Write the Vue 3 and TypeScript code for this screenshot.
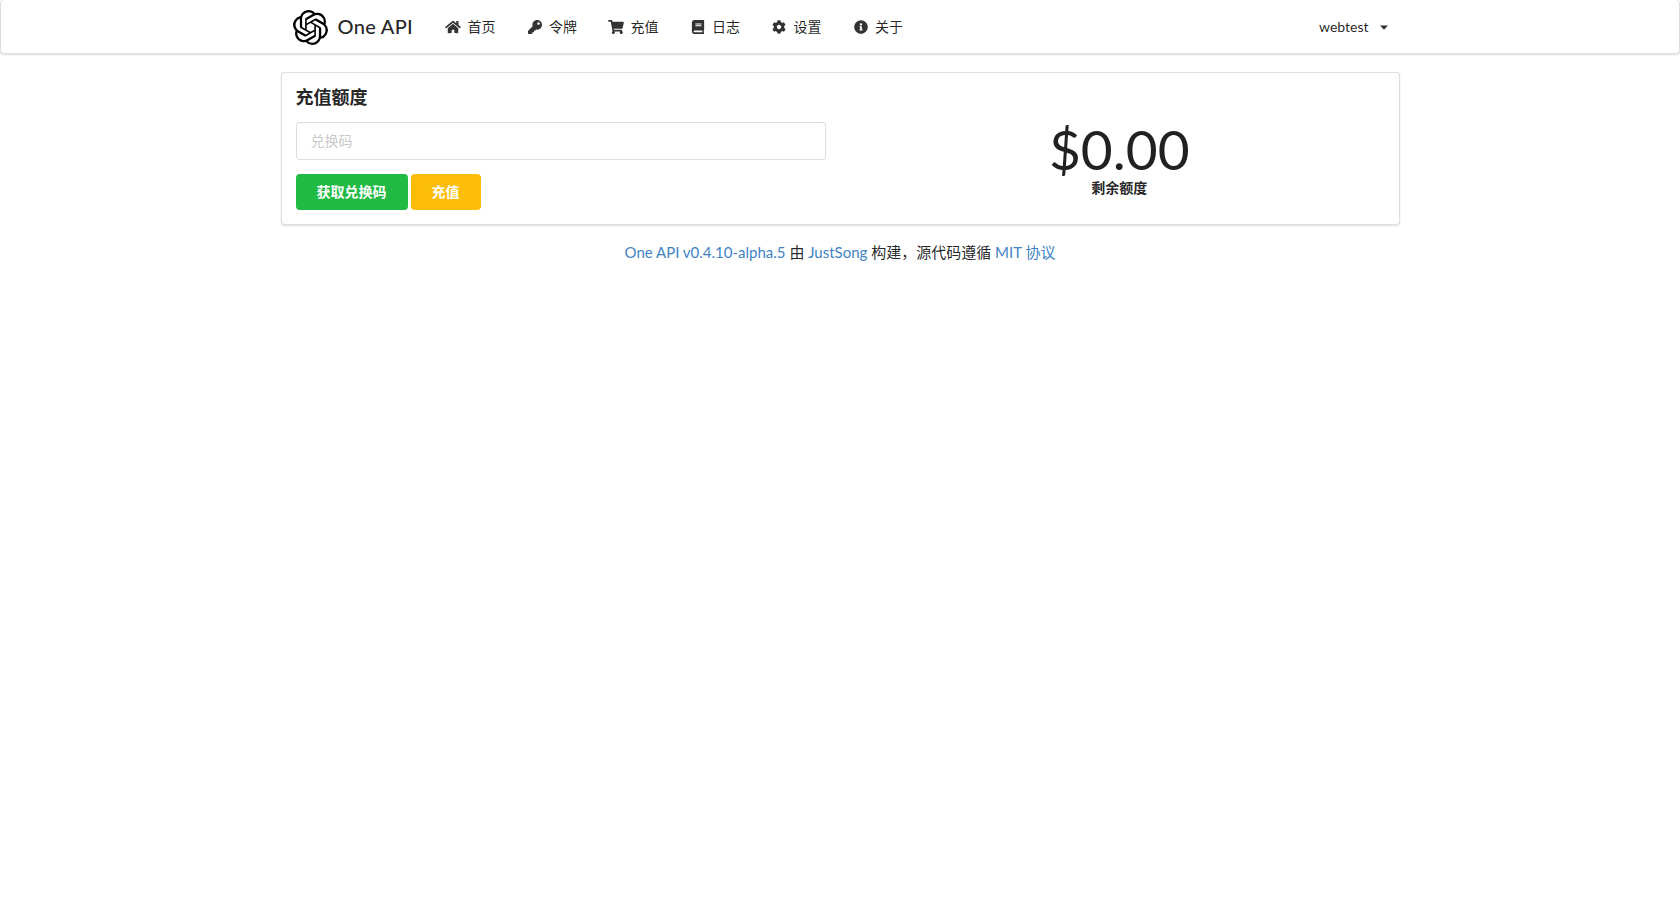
<script setup lang="ts">
interface NavItem {
  label: string
  box: string
  path: string
}
const navItems: NavItem[] = [
  { label: '首页', box: '0 0 576 512', path: 'M280.37 148.26L96 300.11V464a16 16 0 0 0 16 16l112.06-.29a16 16 0 0 0 15.92-16V368a16 16 0 0 1 16-16h64a16 16 0 0 1 16 16v95.64a16 16 0 0 0 16 16.05L464 480a16 16 0 0 0 16-16V300L295.67 148.26a12.19 12.19 0 0 0-15.3 0zM571.6 251.47L488 182.56V44.05a12 12 0 0 0-12-12h-56a12 12 0 0 0-12 12v72.61L318.47 43a48 48 0 0 0-61 0L4.34 251.47a12 12 0 0 0-1.6 16.9l25.5 31A12 12 0 0 0 45.15 301l235.22-193.74a12.19 12.19 0 0 1 15.3 0L530.9 301a12 12 0 0 0 16.9-1.6l25.5-31a12 12 0 0 0-1.7-16.93z' },
  { label: '令牌', box: '0 0 512 512', path: 'M512 176.001C512 273.203 433.202 352 336 352c-11.22 0-22.19-1.062-32.827-3.069l-24.012 27.014A23.999 23.999 0 0 1 261.223 384H224v40c0 13.255-10.745 24-24 24h-40v40c0 13.255-10.745 24-24 24H24c-13.255 0-24-10.745-24-24v-78.059c0-6.365 2.529-12.47 7.029-16.971l161.802-161.802C163.108 213.814 160 195.271 160 176 160 78.798 238.797.001 335.999 0 433.488-.001 512 78.511 512 176.001zM336 128c0 26.51 21.49 48 48 48s48-21.49 48-48-21.49-48-48-48-48 21.49-48 48z' },
  { label: '充值', box: '0 0 576 512', path: 'M528.12 301.319l47.273-208C578.806 78.301 567.391 64 551.99 64H159.208l-9.166-44.81C147.758 8.021 137.93 0 126.529 0H24C10.745 0 0 10.745 0 24v16c0 13.255 10.745 24 24 24h69.883l70.248 343.435C147.325 417.1 136 435.222 136 456c0 30.928 25.072 56 56 56s56-25.072 56-56c0-15.674-6.447-29.835-16.824-40h209.647C430.447 426.165 424 440.326 424 456c0 30.928 25.072 56 56 56s56-25.072 56-56c0-22.172-12.888-41.332-31.579-50.405l5.517-24.276c3.413-15.018-8.002-29.319-23.403-29.319H218.117l-6.545-32h293.145c11.206 0 20.92-7.754 23.403-18.681z' },
  { label: '日志', box: '0 0 448 512', path: 'M448 360V24c0-13.3-10.7-24-24-24H96C43 0 0 43 0 96v320c0 53 43 96 96 96h328c13.3 0 24-10.7 24-24v-16c0-7.5-3.5-14.3-8.9-18.7-4.2-15.4-4.2-59.3 0-74.7 5.4-4.3 8.9-11.1 8.9-18.6zM128 134c0-3.3 2.7-6 6-6h212c3.3 0 6 2.7 6 6v20c0 3.3-2.7 6-6 6H134c-3.3 0-6-2.7-6-6v-20zm0 64c0-3.3 2.7-6 6-6h212c3.3 0 6 2.7 6 6v20c0 3.3-2.7 6-6 6H134c-3.3 0-6-2.7-6-6v-20zm253.4 250H96c-17.7 0-32-14.3-32-32 0-17.6 14.4-32 32-32h285.4c-1.9 17.1-1.9 46.9 0 64z' },
  { label: '设置', box: '0 0 512 512', path: 'M487.4 315.7l-42.6-24.6c4.3-23.2 4.3-47 0-70.2l42.6-24.6c4.9-2.8 7.1-8.6 5.5-14-11.1-35.6-30-67.8-54.7-94.6-3.8-4.1-10-5.1-14.8-2.3L380.8 110c-17.9-15.4-38.5-27.3-60.8-35.1V25.8c0-5.6-3.9-10.5-9.4-11.7-36.7-8.2-74.3-7.8-109.2 0-5.5 1.2-9.4 6.1-9.4 11.7V75c-22.2 7.9-42.8 19.8-60.8 35.1L88.7 85.5c-4.9-2.8-11-1.9-14.8 2.3-24.7 26.7-43.6 58.9-54.7 94.6-1.7 5.4.6 11.2 5.5 14L67.3 221c-4.3 23.2-4.3 47 0 70.2l-42.6 24.6c-4.9 2.8-7.1 8.6-5.5 14 11.1 35.6 30 67.8 54.7 94.6 3.8 4.1 10 5.1 14.8 2.3l42.6-24.6c17.9 15.4 38.5 27.3 60.8 35.1v49.2c0 5.6 3.9 10.5 9.4 11.7 36.7 8.2 74.3 7.8 109.2 0 5.5-1.2 9.4-6.1 9.4-11.7v-49.2c22.2-7.9 42.8-19.8 60.8-35.1l42.6 24.6c4.9 2.8 11 1.9 14.8-2.3 24.7-26.7 43.6-58.9 54.7-94.6 1.5-5.5-.7-11.3-5.6-14.1zM256 336c-44.1 0-80-35.9-80-80s35.9-80 80-80 80 35.9 80 80-35.9 80-80 80z' },
  { label: '关于', box: '0 0 512 512', path: 'M256 8C119.043 8 8 119.083 8 256c0 136.997 111.043 248 248 248s248-111.003 248-248C504 119.083 392.957 8 256 8zm0 110c23.196 0 42 18.804 42 42s-18.804 42-42 42-42-18.804-42-42 18.804-42 42-42zm56 254c0 6.627-5.373 12-12 12h-88c-6.627 0-12-5.373-12-12v-24c0-6.627 5.373-12 12-12h12v-64h-12c-6.627 0-12-5.373-12-12v-24c0-6.627 5.373-12 12-12h64c6.627 0 12 5.373 12 12v100h12c6.627 0 12 5.373 12 12v24z' }
]
const logoPath = 'M22.2819 9.8211a5.9847 5.9847 0 0 0-.5157-4.9108 6.0462 6.0462 0 0 0-6.5098-2.9A6.0651 6.0651 0 0 0 4.9807 4.1818a5.9847 5.9847 0 0 0-3.9977 2.9 6.0462 6.0462 0 0 0 .7427 7.0966 5.98 5.98 0 0 0 .511 4.9107 6.051 6.051 0 0 0 6.5146 2.9001A5.9847 5.9847 0 0 0 13.2599 24a6.0557 6.0557 0 0 0 5.7718-4.2058 5.9894 5.9894 0 0 0 3.9977-2.9001 6.0557 6.0557 0 0 0-.7475-7.0729zm-9.022 12.6081a4.4755 4.4755 0 0 1-2.8764-1.0408l.1419-.0804 4.7783-2.7582a.7948.7948 0 0 0 .3927-.6813v-6.7369l2.02 1.1686a.071.071 0 0 1 .038.052v5.5826a4.504 4.504 0 0 1-4.4945 4.4944zm-9.6607-4.1254a4.4708 4.4708 0 0 1-.5346-3.0137l.142.0852 4.783 2.7582a.7712.7712 0 0 0 .7806 0l5.8428-3.3685v2.3324a.0804.0804 0 0 1-.0332.0615L9.74 19.9502a4.4992 4.4992 0 0 1-6.1408-1.6464zM2.3408 7.8956a4.485 4.485 0 0 1 2.3655-1.9728V11.6a.7664.7664 0 0 0 .3879.6765l5.8144 3.3543-2.0201 1.1685a.0757.0757 0 0 1-.071 0l-4.8303-2.7865A4.504 4.504 0 0 1 2.3408 7.872zm16.5963 3.8558L13.1038 8.364 15.1192 7.2a.0757.0757 0 0 1 .071 0l4.8303 2.7913a4.4944 4.4944 0 0 1-.6765 8.1042v-5.6772a.79.79 0 0 0-.407-.667zm2.0107-3.0231l-.142-.0852-4.7735-2.7818a.7759.7759 0 0 0-.7854 0L9.409 9.2297V6.8974a.0662.0662 0 0 1 .0284-.0615l4.8303-2.7866a4.4992 4.4992 0 0 1 6.6802 4.66zM8.3065 12.863l-2.02-1.1638a.0804.0804 0 0 1-.038-.0567V6.0742a4.4992 4.4992 0 0 1 7.3757-3.4537l-.142.0805L8.704 5.459a.7948.7948 0 0 0-.3927.6813zm1.0976-2.3654l2.602-1.4998 2.6069 1.4998v2.9994l-2.5974 1.4997-2.6067-1.4997Z'
</script>

<template>
  <div class="page">
    <nav class="navbar">
      <div class="nav-inner">
        <a class="brand">
          <svg class="logo" viewBox="0 0 24 24"><path :d="logoPath" /></svg>
          <span class="brand-name">One API</span>
        </a>
        <a v-for="item in navItems" :key="item.label" class="nav-item">
          <span class="icon-box">
            <svg class="icon" :viewBox="item.box"><path :d="item.path" /></svg>
          </span>
          {{ item.label }}
        </a>
        <a class="nav-user">
          webtest
          <svg class="caret" viewBox="0 0 8 5"><path d="M0 0.5h8L4 4.8z" /></svg>
        </a>
      </div>
    </nav>

    <main class="content">
      <section class="card">
        <div class="grid">
          <div class="col">
            <h3 class="title">充值额度</h3>
            <input class="code-input" type="text" placeholder="兑换码" />
            <div class="actions">
              <button class="btn btn-green" type="button">获取兑换码</button>
              <button class="btn btn-yellow" type="button">充值</button>
            </div>
          </div>
          <div class="col stat-col">
            <div class="stat">
              <div class="stat-value">$0.00</div>
              <div class="stat-label">剩余额度</div>
            </div>
          </div>
        </div>
      </section>
      <footer class="footer">
        <a class="link">One API v0.4.10-alpha.5</a> 由 <a class="link">JustSong</a> 构建，源代码遵循 <a class="link">MIT 协议</a>
      </footer>
    </main>
  </div>
</template>

<style>
html,
body {
  margin: 0;
  background: #fff;
}
</style>

<style scoped>
.page {
  min-height: 905px;
  font-family: Lato, "Noto Sans CJK SC", "Helvetica Neue", Arial, sans-serif;
  font-size: 14px;
  line-height: 1.4285em;
  color: rgba(0, 0, 0, 0.87);
}
.navbar {
  height: 52px;
  border: 1px solid rgba(34, 36, 38, 0.15);
  border-top: 0;
  border-radius: 4px;
  box-shadow: 0 1px 2px 0 rgba(34, 36, 38, 0.15);
  background: #fff;
  padding-top: 1px;
}
.nav-inner {
  width: 1119px;
  height: 100%;
  margin: 0 auto;
  display: flex;
  align-items: center;
}
.brand {
  display: flex;
  align-items: center;
  padding: 0 16px 0 12px;
}
.logo {
  width: 35px;
  height: 35px;
  display: block;
}
.brand-name {
  margin-left: 10px;
  font-size: 20px;
  font-weight: 500;
  letter-spacing: 0.3px;
  white-space: nowrap;
  position: relative;
  top: -1px;
}
.nav-item {
  display: flex;
  align-items: center;
  padding: 0 15px 0 16px;
  white-space: nowrap;
  color: rgba(0, 0, 0, 0.87);
}
.icon-box {
  width: 16.5px;
  margin-right: 6px;
  display: flex;
  justify-content: center;
}
.icon {
  height: 14px;
  width: 16px;
  display: block;
  fill: rgba(0, 0, 0, 0.8);
}
.nav-user {
  margin-left: auto;
  padding: 0 11px 0 16px;
  display: flex;
  align-items: center;
  white-space: nowrap;
}
.caret {
  width: 8px;
  height: 5px;
  margin-left: 11px;
  margin-right: 1px;
  fill: rgba(0, 0, 0, 0.8);
}
.content {
  width: 1119px;
  margin: 18px auto 0;
}
.card {
  border: 1px solid rgba(34, 36, 38, 0.15);
  border-radius: 4px;
  box-shadow: 0 1px 2px 0 rgba(34, 36, 38, 0.15);
  background: #fff;
}
.grid {
  display: grid;
  grid-template-columns: 1fr 1fr;
}
.col {
  padding: 14px;
  min-width: 0;
}
.title {
  margin: 0 0 14px;
  font-size: 18px;
  line-height: 21px;
  font-weight: 700;
}
.code-input {
  display: block;
  box-sizing: border-box;
  width: 100%;
  height: 38px;
  padding: 0 14px 2px;
  border: 1px solid rgba(34, 36, 38, 0.15);
  border-radius: 4px;
  outline: none;
  font: inherit;
  color: rgba(0, 0, 0, 0.87);
  background: #fff;
}
.code-input::placeholder {
  color: rgba(191, 191, 191, 0.87);
  opacity: 1;
}
.actions {
  margin-top: 14px;
  display: flex;
  gap: 3px;
}
.btn {
  height: 36px;
  padding: 0 21px;
  border: 0;
  border-radius: 4px;
  font: inherit;
  font-weight: 700;
  line-height: 1;
  color: #fff;
}
.btn-green {
  background: #21ba45;
}
.btn-yellow {
  background: #fbbd08;
}
.stat-col {
  display: flex;
  justify-content: center;
  padding-top: 49px;
}
.stat {
  text-align: center;
}
.stat-value {
  font-size: 55px;
  line-height: 55px;
  font-weight: 400;
}
.stat-label {
  margin-top: 1px;
  font-size: 14px;
  line-height: 20px;
  font-weight: 700;
}
.footer {
  margin-top: 17px;
  text-align: center;
  font-size: 15px;
}
.link {
  color: #4183c4;
}
</style>
